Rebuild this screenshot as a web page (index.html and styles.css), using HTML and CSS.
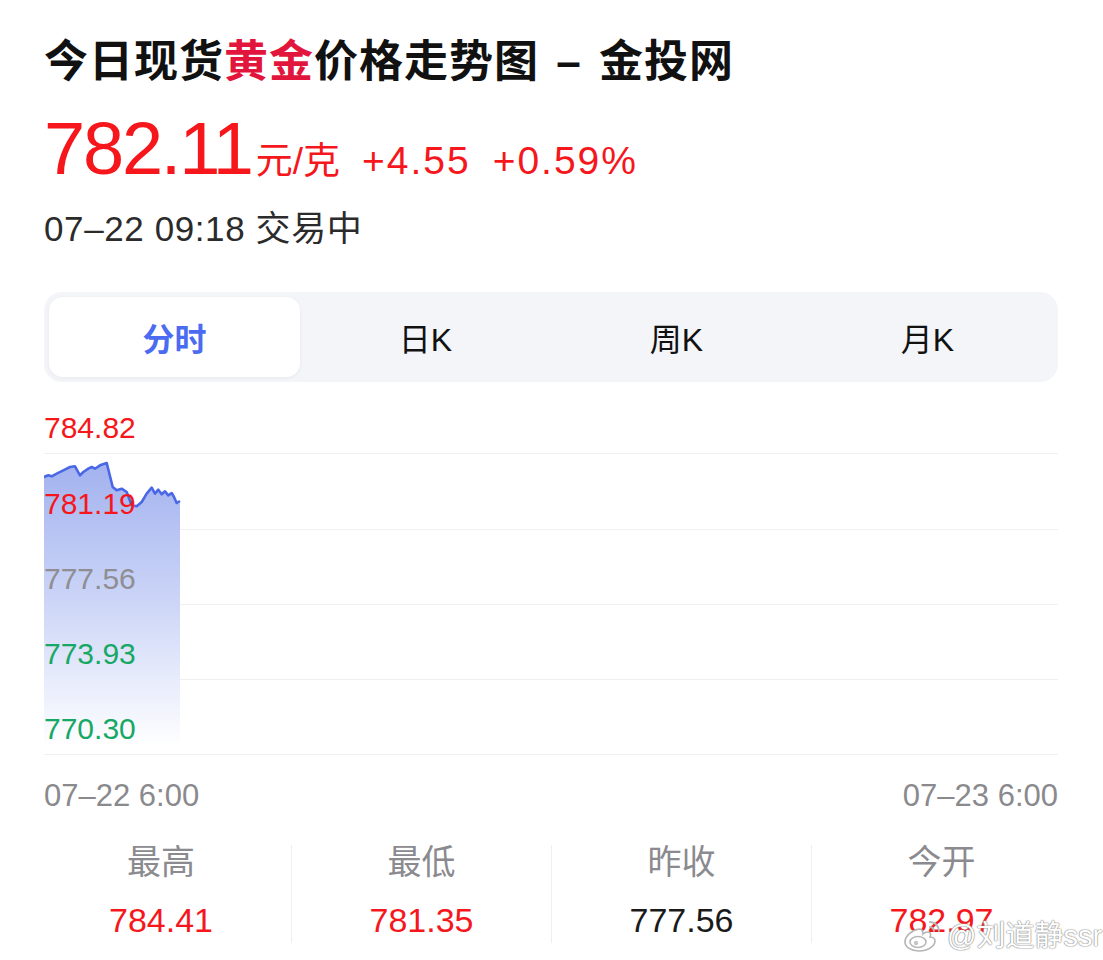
FILE: index.html
```html
<!DOCTYPE html>
<html lang="zh-CN">
<head>
  <meta charset="UTF-8">
  <meta name="viewport" content="width=device-width, initial-scale=1.0">
  <title>今日现货黄金价格走势图 - 金投网</title>
  <link rel="stylesheet" href="styles.css">
</head>
<body>
  <div class="page">
    <h1 class="title">今日现货<span class="gold">黄金</span>价格走势图 <span class="dash">–</span> 金投网</h1>

    <div class="quote">
      <span class="price">782.11</span>
      <span class="unit">元/克</span>
      <span class="change">+4.55</span>
      <span class="change">+0.59%</span>
    </div>

    <div class="status">07–22 09:18 交易中</div>

    <div class="tabs">
      <div class="tab active">分时</div>
      <div class="tab">日K</div>
      <div class="tab">周K</div>
      <div class="tab">月K</div>
    </div>

    <div class="chart">
      <!-- intraday line, drawn under the axis labels -->
      <svg class="plot" width="1014" height="373" viewBox="0 0 1014 373">
        <defs>
          <linearGradient id="fade" x1="0" y1="84" x2="0" y2="368" gradientUnits="userSpaceOnUse">
            <stop offset="0" stop-color="#a3b2ef"/>
            <stop offset="0.5" stop-color="#cdd6f7"/>
            <stop offset="1" stop-color="#ffffff"/>
          </linearGradient>
        </defs>
        <polygon fill="url(#fade)" points="0,98 4.3,96.3 7.7,97.3 12.7,94.7 19.3,91.3 26,88 31,87.3 36,96.3 39.3,93 44.3,89.7 47.7,88 51,89.7 56,86.3 62.7,84 68.7,108 72.7,111.3 77.7,109.7 82.7,113 87.7,126.3 92.7,127.3 97.7,123 102.7,114.7 107.7,108.7 111,114.7 114.3,110.7 117.7,115.3 121,112.3 124.3,116.3 127.7,114 130,118 132.7,124 136,122 136,368 0,368"/>
        <polyline fill="none" stroke="#4a68e6" stroke-width="2.6" stroke-linejoin="round" points="0,98 4.3,96.3 7.7,97.3 12.7,94.7 19.3,91.3 26,88 31,87.3 36,96.3 39.3,93 44.3,89.7 47.7,88 51,89.7 56,86.3 62.7,84 68.7,108 72.7,111.3 77.7,109.7 82.7,113 87.7,126.3 92.7,127.3 97.7,123 102.7,114.7 107.7,108.7 111,114.7 114.3,110.7 117.7,115.3 121,112.3 124.3,116.3 127.7,114 130,118 132.7,124 136,122"/>
      </svg>
      <div class="row"><span class="axis up">784.82</span></div>
      <div class="row"><span class="axis up">781.19</span></div>
      <div class="row"><span class="axis flat">777.56</span></div>
      <div class="row"><span class="axis down">773.93</span></div>
      <div class="row"><span class="axis down">770.30</span></div>
    </div>

    <div class="dates">
      <span>07–22 6:00</span>
      <span>07–23 6:00</span>
    </div>

    <div class="stats">
      <div class="stat">
        <div class="stat-label">最高</div>
        <div class="stat-value up">784.41</div>
      </div>
      <div class="stat">
        <div class="stat-label">最低</div>
        <div class="stat-value up">781.35</div>
      </div>
      <div class="stat">
        <div class="stat-label">昨收</div>
        <div class="stat-value">777.56</div>
      </div>
      <div class="stat">
        <div class="stat-label">今开</div>
        <div class="stat-value up">782.97</div>
      </div>
    </div>
  </div>

  <!-- weibo watermark -->
  <div class="watermark">
    <svg class="wb-logo" width="40" height="34" viewBox="0 0 40 34">
      <path d="M16 10c-7 1-14 7-14 13 0 5 6 9 14 9 9 0 16-5 16-10 0-3-3-4-5-4 1-2 1-5-2-5-2 0-4 1-5 2 0-3-1-5-4-5z" fill="#fff" stroke="#b5b5b5" stroke-width="1.6"/>
      <ellipse cx="15" cy="23" rx="8" ry="5.5" fill="#fff" stroke="#b5b5b5" stroke-width="1.5"/>
      <circle cx="13" cy="24" r="2.2" fill="#c5c5c5"/>
      <path d="M27 3c5 0 9 4 9 9" fill="none" stroke="#b5b5b5" stroke-width="2" stroke-linecap="round"/>
      <path d="M27 8c2 0 4 2 4 4" fill="none" stroke="#b5b5b5" stroke-width="2" stroke-linecap="round"/>
    </svg>
    <span class="wb-name">@刘道静ssr</span>
  </div>
</body>
</html>
```

FILE: styles.css
```css
body {
  margin: 0;
  background-color: #ffffff;
  font-family: "Liberation Sans", "Noto Sans CJK SC", sans-serif;
  color: #111111;
}
.page {
  padding: 35px 45px 0 44px;
}
.title {
  margin: 0;
  font-size: 44px;
  line-height: 54px;
  font-weight: 700;
  color: #111111;
  letter-spacing: 1px;
  white-space: nowrap;
}
.title .gold {
  color: #e2163c;
}
.title .dash {
  margin: 0 4px;
}
.quote {
  display: flex;
  align-items: baseline;
  margin-top: 23px;
  color: #f5171c;
}
.price {
  font-size: 74px;
  line-height: 74px;
  letter-spacing: -2.2px;
}
.unit {
  font-size: 37px;
  line-height: 37px;
  margin-left: 4px;
}
.change {
  font-size: 39px;
  line-height: 39px;
  letter-spacing: 2px;
  margin-left: 22px;
}
.status {
  margin-top: 25px;
  font-size: 35px;
  line-height: 35px;
  letter-spacing: 0.6px;
  color: #2b2b2b;
}
.tabs {
  display: flex;
  margin-top: 46px;
  height: 90px;
  padding: 5px;
  box-sizing: border-box;
  background-color: #f4f5f8;
  border-radius: 18px;
}
.tab {
  flex: 1;
  display: flex;
  align-items: center;
  justify-content: center;
  font-size: 32px;
  color: #111111;
  border-radius: 14px;
}
.tab.active {
  background-color: #ffffff;
  color: #4b6bf0;
  font-weight: 700;
  box-shadow: 0 1px 4px rgba(0, 0, 0, 0.05);
}
.chart {
  position: relative;
  margin-top: -3px;
}
.plot {
  position: absolute;
  left: 0;
  top: 0;
}
.row {
  display: flex;
  align-items: flex-end;
  height: 75.25px;
  box-sizing: border-box;
  padding-bottom: 10px;
  border-bottom: 1px solid #f0f0f2;
}
.row:first-child {
  height: 72px;
}
.axis {
  position: relative;
  font-size: 30px;
  line-height: 30px;
}
.up {
  color: #f5171c;
}
.flat {
  color: #8e8e93;
}
.down {
  color: #17a865;
}
.dates {
  display: flex;
  justify-content: space-between;
  margin-top: 25px;
  font-size: 31px;
  line-height: 31px;
  color: #8a8a8e;
}
.stats {
  display: grid;
  grid-template-columns: repeat(4, 260px);
  margin: 34px -13px 0 -13px;
}
.stat {
  height: 98px;
  text-align: center;
}
.stat + .stat {
  border-left: 1px solid #efeff1;
}
.stat-label {
  font-size: 34px;
  line-height: 34px;
  color: #8a8a8f;
}
.stat-value {
  margin-top: 24px;
  font-size: 34px;
  line-height: 34px;
  color: #1a1a1a;
}
.stat-value.up {
  color: #f5171c;
}
.watermark {
  position: absolute;
  left: 903px;
  top: 918px;
  display: flex;
  align-items: center;
  gap: 4px;
}
.wb-name {
  font-size: 29px;
  line-height: 36px;
  color: #ffffff;
  text-shadow: 0 0 1px #8f8f8f, 0 0 1px #8f8f8f, 0 0 2px #a0a0a0;
}
```
